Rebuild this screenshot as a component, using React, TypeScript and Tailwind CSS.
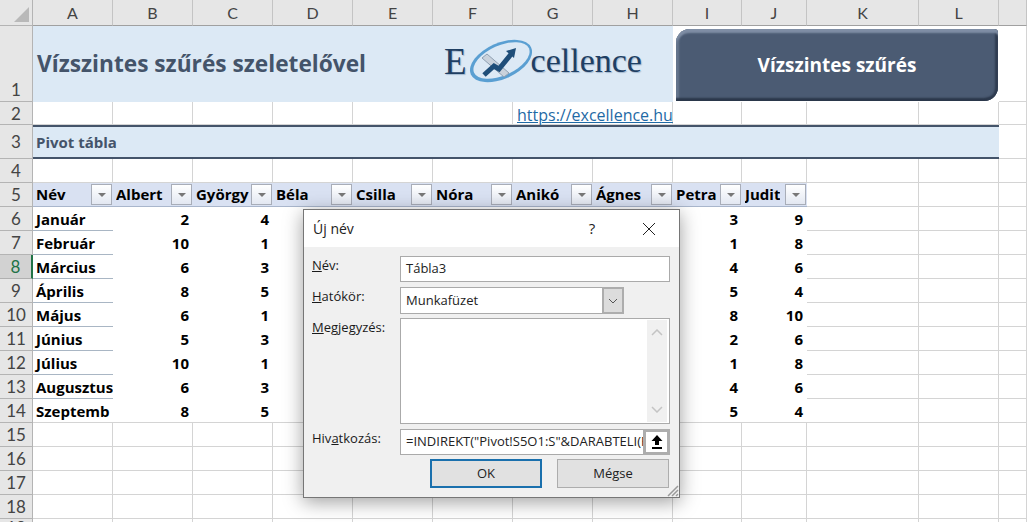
const gridLine = 'border-r border-b border-[#d4d4d4]';

const columns = ['A', 'B', 'C', 'D', 'E', 'F', 'G', 'H', 'I', 'J', 'K', 'L', ''];
const names = ['Név', 'Albert', 'György', 'Béla', 'Csilla', 'Nóra', 'Anikó', 'Ágnes', 'Petra', 'Judit'];

const months: [string, number, number, number, number][] = [
  ['Január', 2, 4, 3, 9],
  ['Február', 10, 1, 1, 8],
  ['Március', 6, 3, 4, 6],
  ['Április', 8, 5, 5, 4],
  ['Május', 6, 1, 8, 10],
  ['Június', 5, 3, 2, 6],
  ['Július', 10, 1, 1, 8],
  ['Augusztus', 6, 3, 4, 6],
  ['Szeptemb', 8, 5, 5, 4],
];

function RowHead({ n, active, low }: { n: number; active?: boolean; low?: boolean }) {
  return (
    <div
      className={`flex justify-center font-['Lato'] text-[17px] font-normal leading-none border-b border-r ${low ? 'items-end pb-[3px]' : 'items-center'} ${
        active ? 'bg-[#d2d2d2] text-[#217346] border-b-[#b0b0b0] border-r-2 border-r-[#217346]' : 'bg-[#e6e6e6] text-[#444] border-[#b4b4b4]'
      }`}
    >
      {n}
    </div>
  );
}

function Blank({ count }: { count: number }) {
  return (
    <>
      {Array.from({ length: count }).map((_, i) => (
        <div key={i} className={gridLine} />
      ))}
    </>
  );
}

function FilterButton() {
  return (
    <div className="flex h-[21px] w-[21px] shrink-0 items-center justify-center border border-[#a8adb8] bg-gradient-to-b from-[#ffffff] to-[#e3e8f2]">
      <div className="h-0 w-0 border-x-[4px] border-t-[4px] border-x-transparent border-t-[#777]" />
    </div>
  );
}

function Value({ v }: { v?: number }) {
  return <div className="flex items-center justify-end pr-[4px] pt-px text-black">{v}</div>;
}

function Logo() {
  return (
    <div className="mt-[-6px] flex items-center font-['Liberation_Serif'] font-normal text-[#1f3f63] [text-shadow:1px_1px_1px_#a3b8cf]">
      <span className="text-[37px] leading-none">E</span>
      <svg width="64" height="50" viewBox="0 0 64 50" className="ml-[2px] mr-[-2px] shrink-0">
        <ellipse cx="32" cy="25" rx="33" ry="18" transform="rotate(-24 32 25)" fill="#5a9fd2" />
        <ellipse cx="32.5" cy="24.5" rx="30" ry="15" transform="rotate(-24 32.5 24.5)" fill="#dce9f5" />
        <path d="M13 22 L18 18 L40 37 L35 41 Z" fill="#c9d2dc" stroke="#8fa0b2" strokeWidth="1" />
        <path d="M15 39 L25 30 L30 33 L43 17" fill="none" stroke="#1f4e79" strokeWidth="5" />
        <path d="M37 15 L47 12 L45 22 Z" fill="#1f4e79" />
      </svg>
      <span className="text-[34px] leading-none">cellence</span>
    </div>
  );
}

function Dialog() {
  const label = 'w-[96px] shrink-0 pl-[8px] text-[13px] leading-[18px] text-[#1a1a1a]';
  return (
    <div className="absolute left-[303px] top-[209px] h-[289px] w-[377px] border border-[#767676] bg-[#f0f0f0] font-['Open_Sans'] font-normal shadow-[0_4px_18px_rgba(0,0,0,0.38)]">
      <div className="flex h-[37px] items-center bg-white pl-[9px] text-[14px] text-[#222]">
        <span>Új név</span>
        <span className="ml-[235px] text-[15px]">?</span>
        <svg width="14" height="14" viewBox="0 0 14 14" className="ml-[47px]">
          <path d="M1 1 L13 13 M13 1 L1 13" stroke="#222" strokeWidth="1" fill="none" />
        </svg>
      </div>

      <div className="flex flex-col pt-[9px]">
        <div className="flex">
          <div className={label}><span className="underline">N</span>év:</div>
          <div className="flex h-[26px] w-[270px] items-center border border-[#aaa] bg-white pl-[5px] text-[13px] text-[#222]">Tábla3</div>
        </div>

        <div className="mt-[5px] flex">
          <div className={label}><span className="underline">H</span>atókör:</div>
          <div className="flex h-[27px] w-[202px] items-center border border-r-0 border-[#aaa] bg-white pl-[5px] text-[13px] text-[#222]">Munkafüzet</div>
          <div className="flex h-[27px] w-[22px] items-center justify-center border-2 border-[#adadad] bg-[#dcdcdc]">
            <svg width="10" height="6" viewBox="0 0 10 6"><path d="M1 1 L5 5 L9 1" stroke="#555" fill="none" /></svg>
          </div>
        </div>

        <div className="mt-[4px] flex">
          <div className={label}><span className="underline">M</span>egjegyzés:</div>
          <div className="flex h-[106px] w-[270px] justify-end border border-[#aaa] bg-white py-[1px] pr-[2px]">
            <div className="flex w-[20px] flex-col items-center justify-between bg-[#f0f0f0] py-[9px]">
              <svg width="12" height="7" viewBox="0 0 12 7"><path d="M1 6 L6 1 L11 6" stroke="#c4c4c4" strokeWidth="1.5" fill="none" /></svg>
              <svg width="12" height="7" viewBox="0 0 12 7"><path d="M1 1 L6 6 L11 1" stroke="#c4c4c4" strokeWidth="1.5" fill="none" /></svg>
            </div>
          </div>
        </div>

        <div className="mt-[5px] flex">
          <div className={label}>Hiv<span className="underline">a</span>tkozás:</div>
          <div className="flex h-[26px] w-[243px] items-center overflow-hidden whitespace-nowrap border border-r-0 border-[#aaa] bg-white pl-[5px] text-[13px] text-[#222]">
            =INDIREKT("Pivot!S5O1:S"&amp;DARABTELI(F
          </div>
          <div className="flex h-[26px] w-[27px] items-center justify-center border-[3px] border-[#adadad] bg-white">
            <svg width="12" height="14" viewBox="0 0 12 14">
              <path d="M6 0 L11.5 6 L8 6 L8 10 L4 10 L4 6 L0.5 6 Z M1 12 H11 V14 H1 Z" fill="#000" />
            </svg>
          </div>
        </div>

        <div className="mt-[4px] flex pl-[126px] text-[13px] text-[#222]">
          <div className="flex h-[29px] w-[112px] items-center justify-center border-2 border-[#1a70ad] bg-[#e1e1e1]">OK</div>
          <div className="ml-[15px] flex h-[29px] w-[112px] items-center justify-center border border-[#adadad] bg-[#e1e1e1]">Mégse</div>
        </div>
      </div>

      <svg width="12" height="12" viewBox="0 0 12 12" className="absolute bottom-0 right-0">
        <path d="M11 1 L1 11 M11 5 L5 11 M11 9 L9 11" stroke="#9a9a9a" strokeWidth="1.5" fill="none" />
      </svg>
    </div>
  );
}

export default function App() {
  return (
    <div className="relative h-[522px] w-[1027px] overflow-hidden bg-white font-['Open_Sans'] text-[15px] font-bold">
      <div className="grid grid-cols-[33px_80px_80px_80px_80px_80px_80px_80px_80px_69px_65px_112px_80px_28px] grid-rows-[26px_76px_23px_34px_24px_24px_repeat(13,24px)]">
        {/* column letters */}
        <div className="flex items-end justify-end border-b border-r border-[#b4b4b4] bg-[#e6e6e6] p-[3px]">
          <div className="h-0 w-0 border-b-[15px] border-l-[15px] border-b-[#b9b9b9] border-l-transparent" />
        </div>
        {columns.map((c, i) => (
          <div key={i} className="flex items-center justify-center border-b border-r border-b-[#a0a0a0] border-r-[#c4c4c4] bg-[#e6e6e6] font-['Lato'] text-[16px] font-normal text-[#444]">
            {c}
          </div>
        ))}

        {/* row 1 */}
        <RowHead n={1} low />
        <div className="col-span-8 flex items-center bg-[#dce9f5] pl-[4px]">
          <span className="w-[407px] shrink-0 whitespace-nowrap text-[22.7px] text-[#44546a]">Vízszintes szűrés szeletelővel</span>
          <Logo />
        </div>
        <div className="col-span-4 pb-px pl-[3px] pr-px pt-[3px]">
          <div className="flex h-full items-center justify-center rounded-br-[14px] rounded-tl-[14px] rounded-tr-[4px] bg-[#4b5b73] text-[19px] text-white shadow-[inset_0_5px_2px_-1px_#7f8ea5,inset_-4px_0_2px_-1px_#2f3c50,inset_0_-4px_2px_-1px_#2b374a,inset_4px_0_2px_-1px_#66768e]">
            Vízszintes szűrés
          </div>
        </div>
        <Blank count={1} />

        {/* row 2 */}
        <RowHead n={2} />
        <Blank count={6} />
        <div className={`col-span-2 flex items-center pl-[4px] pt-[3px] text-[16px] font-normal text-[#1f6aa5] underline ${gridLine}`}>https://excellence.hu</div>
        <Blank count={5} />

        {/* row 3 */}
        <RowHead n={3} />
        <div className="col-span-12 flex items-center border-y-2 border-[#44546a] bg-[#dce9f5] pl-[3px] text-[15px] text-[#44546a]">Pivot tábla</div>
        <Blank count={1} />

        {/* row 4 */}
        <RowHead n={4} />
        <Blank count={13} />

        {/* row 5: pivot header */}
        <RowHead n={5} />
        {names.map((name) => (
          <div key={name} className="flex items-center justify-between overflow-hidden border-b border-[#a9b6cc] bg-[#d9e1f2] pl-[3px] pr-px text-black">
            <span className="overflow-hidden whitespace-nowrap">{name}</span>
            <FilterButton />
          </div>
        ))}
        <Blank count={3} />

        {/* rows 6-14: pivot body */}
        {months.map(([month, b, c, i, j], idx) => (
          <div key={month} className="contents">
            <RowHead n={idx + 6} active={idx === 2} />
            <div className={`flex items-center overflow-hidden whitespace-nowrap border-b pl-[3px] pt-px text-black ${idx === 8 ? 'border-[#d4d4d4]' : 'border-[#a9b6c4]'}`}>{month}</div>
            <div className={`col-span-9 grid grid-cols-[80px_80px_80px_80px_80px_80px_80px_69px_65px] ${idx === 8 ? 'border-b border-[#d4d4d4]' : ''}`}>
              <Value v={b} />
              <Value v={c} />
              <Value />
              <Value />
              <Value />
              <Value />
              <Value />
              <Value v={i} />
              <Value v={j} />
            </div>
            <Blank count={3} />
          </div>
        ))}

        {/* rows 15-19: empty */}
        {[15, 16, 17, 18, 19].map((n) => (
          <div key={n} className="contents">
            <RowHead n={n} />
            <Blank count={13} />
          </div>
        ))}
      </div>

      <Dialog />
    </div>
  );
}
